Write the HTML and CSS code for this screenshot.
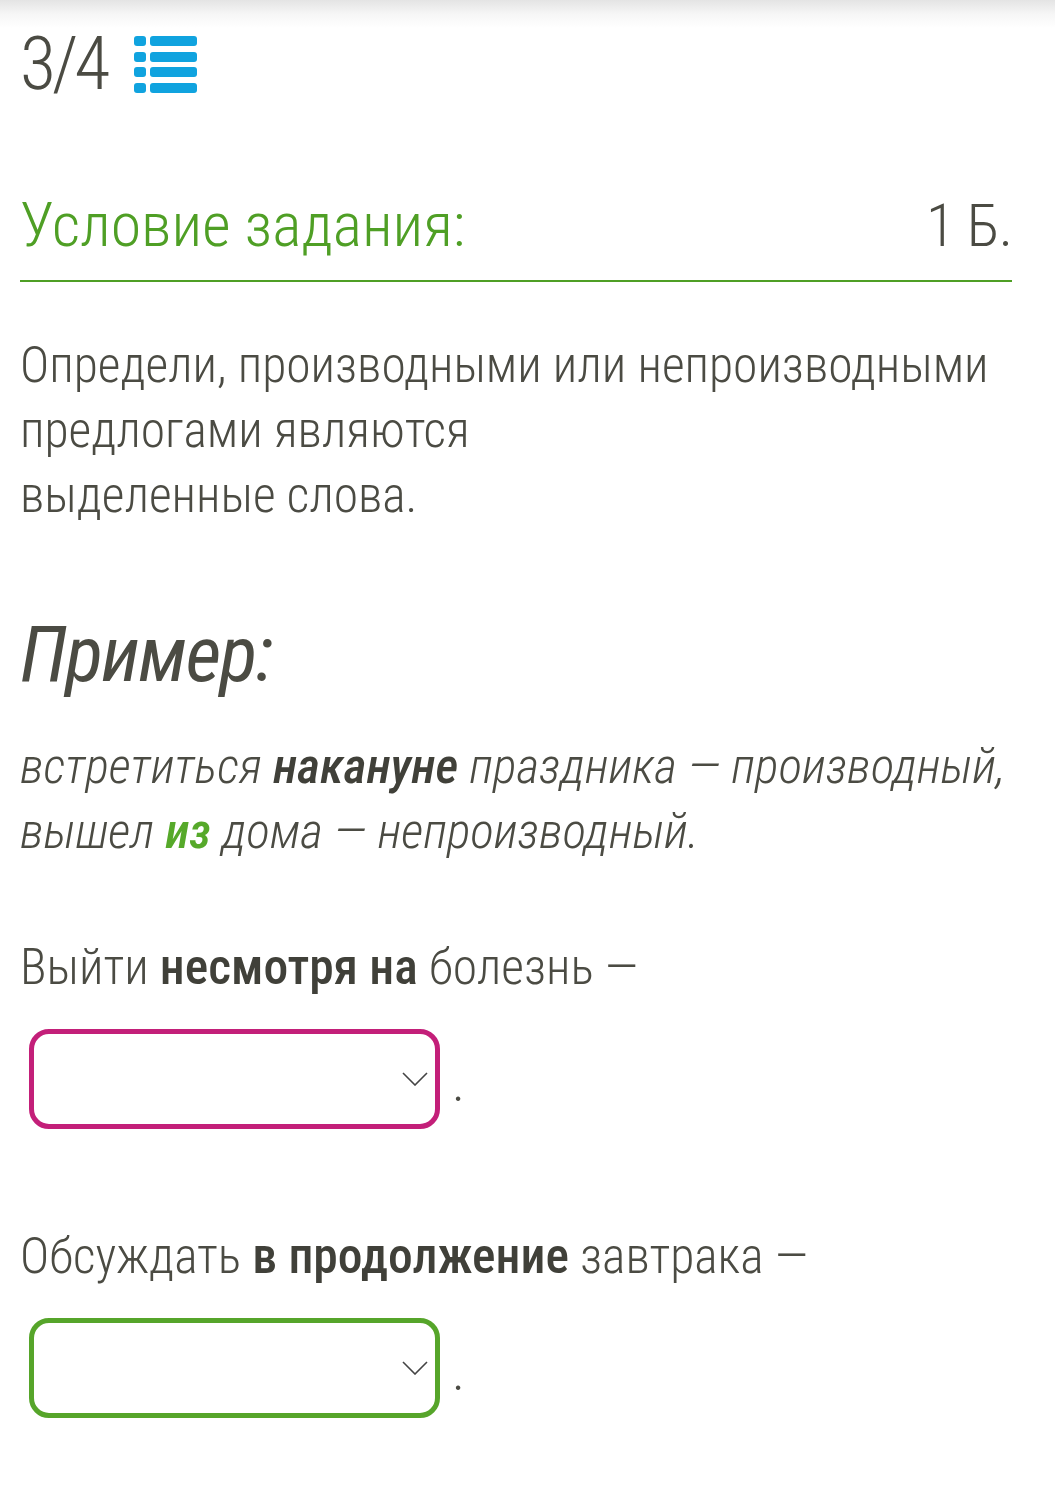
FILE: index.html
```html
<!DOCTYPE html>
<html lang="ru">
<head>
    <meta charset="UTF-8">
    <meta name="viewport" content="width=device-width, initial-scale=1.0">
    <title>Задание 3/4</title>
    <link rel="stylesheet" href="styles.css">
</head>

<body>
    <header class="progress">
        <span class="counter">3/4</span>
        <svg class="list-icon" width="63" height="57" viewBox="0 0 63 57">
            <rect x="0" y="0" width="12" height="10" rx="3"/>
            <rect x="16" y="0" width="47" height="10" rx="3"/>
            <rect x="0" y="16" width="12" height="10" rx="3"/>
            <rect x="16" y="16" width="47" height="10" rx="3"/>
            <rect x="0" y="31" width="12" height="10" rx="3"/>
            <rect x="16" y="31" width="47" height="10" rx="3"/>
            <rect x="0" y="47" width="12" height="10" rx="3"/>
            <rect x="16" y="47" width="47" height="10" rx="3"/>
        </svg>
    </header>

    <main class="task">
        <div class="task-head">
            <h2>Условие задания:</h2>
            <span class="points">1 Б.</span>
        </div>

        <p class="question">Определи, производными или непроизводными<br>предлогами являются<br>выделенные слова.</p>

        <h3 class="example-title">Пример:</h3>
        <p class="example">встретиться <b>накануне</b> праздника — производный,<br>вышел <b class="green">из</b> дома — непроизводный.</p>

        <div class="item">
            <p>Выйти <b>несмотря на</b> болезнь —</p>
            <div class="answer">
                <div class="select pink">
                    <svg class="chevron" width="26" height="14" viewBox="0 0 26 14"><path d="M1 1 L13 13 L25 1"/></svg>
                </div>
                <span class="dot">.</span>
            </div>
        </div>

        <div class="item">
            <p>Обсуждать <b>в продолжение</b> завтрака —</p>
            <div class="answer">
                <div class="select green-box">
                    <svg class="chevron" width="26" height="14" viewBox="0 0 26 14"><path d="M1 1 L13 13 L25 1"/></svg>
                </div>
                <span class="dot">.</span>
            </div>
        </div>
    </main>
</body>
</html>
```

FILE: styles.css
```css
body {
    margin: 0;
    padding: 0 43px 0 20px;
    font-family: 'Roboto', sans-serif;
    font-stretch: 75%;
    font-weight: 300;
    color: #4b4b43;
    background: linear-gradient(#e4e4e4 0, #f6f6f6 14px, #fff 28px) no-repeat;
    background-color: #fff;
}

.progress {
    display: flex;
    align-items: center;
    gap: 28px;
    height: 128px;
}

.counter {
    font-size: 74px;
    font-weight: 300;
    letter-spacing: -4px;
    margin-top: -1px;
}

.list-icon {
    fill: #10a3df;
}

.task-head {
    display: flex;
    justify-content: space-between;
    align-items: baseline;
    border-bottom: 2px solid #4f9f25;
    padding-bottom: 19px;
    margin-top: 60px;
}

.task-head h2 {
    margin: 0;
    font-size: 62px;
    font-weight: 300;
    color: #4f9f25;
}

.points {
    font-size: 60px;
    font-weight: 300;
    letter-spacing: -1px;
}

.question {
    margin: 51px 0 0;
    font-size: 49.5px;
    line-height: 65px;
    white-space: nowrap;
}

.example-title {
    margin: 88px 0 0;
    font-size: 78px;
    font-style: italic;
    font-weight: 400;
    letter-spacing: -1.5px;
    line-height: 1;
}

.example {
    margin: 40px 0 0;
    font-size: 49.5px;
    font-style: italic;
    line-height: 65px;
    white-space: nowrap;
}

b {
    font-weight: 500;
    color: #404039;
}

b.green {
    color: #56a92a;
}

.item p {
    margin: 70px 0 0;
    font-size: 49.5px;
    line-height: 66px;
}

.item + .item p {
    margin-top: 94px;
}

.answer {
    display: flex;
    align-items: flex-end;
    gap: 12px;
    margin: 29px 0 0 9px;
}

.select {
    width: 411px;
    height: 100px;
    border: 5px solid;
    border-radius: 20px;
    display: flex;
    align-items: center;
    justify-content: flex-end;
    padding-right: 7px;
    box-sizing: border-box;
}

.select.pink {
    border-color: #c31f79;
}

.select.green-box {
    border-color: #56a52a;
}

.chevron {
    fill: none;
    stroke: #444;
    stroke-width: 1.6;
}

.dot {
    font-size: 54px;
    line-height: 54px;
    margin-bottom: 19px;
}
```
